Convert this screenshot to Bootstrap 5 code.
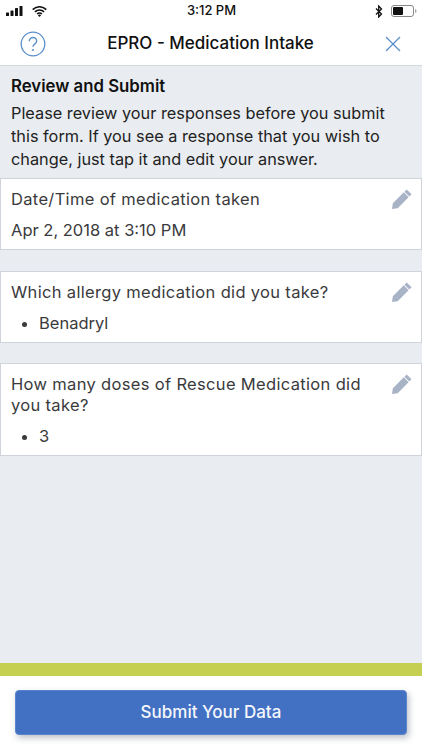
<!DOCTYPE html>
<html lang="en"><head><meta charset="utf-8"><title>EPRO</title>
<link href="https://cdn.jsdelivr.net/npm/bootstrap@5.3.0/dist/css/bootstrap.min.css" rel="stylesheet">
<style>
html,body{height:750px;overflow:hidden}
body{width:422px;margin:0;font-family:Inter,"Liberation Sans",sans-serif;background:#fff;color:#222}
.shell{height:750px}
.status{height:22px;font-size:13px;padding:0 5px 0 6px;color:#111}
.status-col{width:130px}
.topbar{height:44px;background:#fff;border-bottom:1px solid #d5d9dd;padding:0 21px 0 20px}
.topbar-side{flex:0 0 30px}
.topbar-title{font-size:17px;font-weight:500;color:#111}
.body-area{background:#e9edf1}
.intro{padding:10px 11px 7px}
.intro-head{font-size:16.8px;font-weight:600;line-height:20px;color:#111;margin-bottom:6px}
.intro-text{font-size:16.3px;line-height:23px;color:#222;margin:0}
.answer{background:#fff;border:1px solid #cfd4da;margin-bottom:20.5px;padding:10px 10px 7.5px;font-size:16.5px;line-height:22.5px;color:#3a3a3c}
.answer-q{padding-right:30px;letter-spacing:.33px;line-height:21px}
.answer-v{margin-top:9px}
.answer ul{margin:9px 0 0;padding-left:28px}
.pencil{position:absolute;top:10px;right:9px}
.accent{height:13px;background:#c5d052}
.foot{height:74px;padding:14px 15px 15px;background:#fff}
.submit{width:392px;height:45px;background:#4270c2;border:1px solid #5b85cc;border-radius:4px;color:#f4f7fc;font-size:17px;font-weight:500;box-shadow:2px 3px 6px rgba(40,50,70,.3)}
.submit:hover{background:#4270c2;color:#f4f7fc}
</style></head>
<body>
<div class="shell d-flex flex-column">
  <div class="status d-flex align-items-center justify-content-between">
    <div class="status-col d-flex align-items-center gap-2">
      <svg width="18" height="10" viewBox="0 0 18 10"><rect x="0" y="6.500" width="3" height="3.500" rx=".6" fill="#111"/><rect x="4.500" y="4.500" width="3" height="5.500" rx=".6" fill="#111"/><rect x="9" y="2" width="3" height="8" rx=".6" fill="#111"/><rect x="13.500" y="0" width="3" height="10" rx=".6" fill="#111"/></svg>
      <svg width="15" height="11" viewBox="0 0 15 11"><path d="M.7 3.600a9.600 9.600 0 0 1 13.600 0M2.900 5.900a6.500 6.500 0 0 1 9.200 0M5.100 8a3.400 3.400 0 0 1 4.800 0" fill="none" stroke="#111" stroke-width="1.600"/><path d="M7.500 11 5.900 9.200a2.300 2.300 0 0 1 3.200 0z" fill="#111"/></svg>
    </div>
    <div class="fw-medium">3:12 PM</div>
    <div class="status-col d-flex align-items-center justify-content-end gap-2">
      <svg width="8" height="13" viewBox="0 0 8 13"><path d="M1 3.500l5.500 5.500L3.700 12V1L6.500 4 1 9.500" fill="none" stroke="#111" stroke-width="1.300"/></svg>
      <svg width="26" height="12" viewBox="0 0 26 12"><rect x=".5" y=".5" width="22" height="11" rx="2.500" fill="none" stroke="#888"/><rect x="2" y="2" width="10" height="8" rx="1" fill="#111"/><path d="M24 4v4c1 0 1.500-1 1.500-2S25 4 24 4z" fill="#aaa"/></svg>
    </div>
  </div>
  <div class="topbar d-flex align-items-center justify-content-between">
    <div class="topbar-side d-flex"><svg width="26" height="26" viewBox="0 0 26 26"><circle cx="13" cy="13" r="11.800" fill="none" stroke="#5a8fc9" stroke-width="1.300"/><path d="M9.300 10.200a3.700 3.700 0 0 1 7.400 0c0 2.600-3.700 2.800-3.700 5.600" fill="none" stroke="#5a8fc9" stroke-width="1.400"/><circle cx="13" cy="19" r="1" fill="#5a8fc9"/></svg></div>
    <div class="topbar-title">EPRO - Medication Intake</div>
    <div class="topbar-side d-flex justify-content-end"><svg width="16" height="16" viewBox="0 0 16 16"><path d="M1 1l14 14M15 1L1 15" stroke="#5a8fc9" stroke-width="1.300" fill="none"/></svg></div>
  </div>
  <div class="body-area flex-grow-1">
    <div class="intro">
      <div class="intro-head">Review and Submit</div>
      <p class="intro-text">Please review your responses before you submit this form. If you see a response that you wish to change, just tap it and edit your answer.</p>
    </div>
    <div class="answer position-relative">
      <div class="answer-q">Date/Time of medication taken</div>
      <div class="answer-v">Apr 2, 2018 at 3:10 PM</div>
      <svg class="pencil" width="20" height="20" viewBox="0 0 19 19"><path d="M14 .4l4.600 4.600-2.200 2.200L11.800 2.600zM11.200 3.200l4.600 4.600L5.400 18.200 0 19l.8-5.400z" fill="#a9b3c6"/></svg>
    </div>
    <div class="answer position-relative">
      <div class="answer-q">Which allergy medication did you take?</div>
      <ul><li>Benadryl</li></ul>
      <svg class="pencil" width="20" height="20" viewBox="0 0 19 19"><path d="M14 .4l4.600 4.600-2.200 2.200L11.800 2.600zM11.200 3.200l4.600 4.600L5.400 18.200 0 19l.8-5.400z" fill="#a9b3c6"/></svg>
    </div>
    <div class="answer position-relative">
      <div class="answer-q">How many doses of Rescue Medication did you take?</div>
      <ul><li>3</li></ul>
      <svg class="pencil" width="20" height="20" viewBox="0 0 19 19"><path d="M14 .4l4.600 4.600-2.200 2.200L11.800 2.600zM11.200 3.200l4.600 4.600L5.400 18.200 0 19l.8-5.400z" fill="#a9b3c6"/></svg>
    </div>
  </div>
  <div class="accent"></div>
  <div class="foot"><button type="button" class="btn submit d-block p-0">Submit Your Data</button></div>
</div>
</body></html>
